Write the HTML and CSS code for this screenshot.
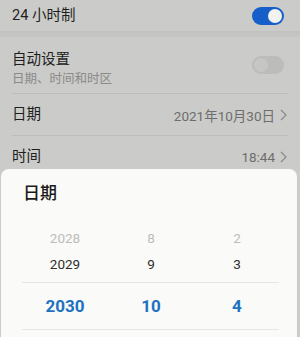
FILE: index.html
```html
<!DOCTYPE html>
<html lang="zh">
<head>
<meta charset="utf-8">
<link rel="stylesheet" href="styles.css">
</head>
<body>
<div class="screen">
  <div class="row row-top">
    <span class="label">24 小时制</span>
    <span class="switch on"><span class="knob"></span></span>
  </div>
  <div class="band"></div>
  <div class="row row-auto">
    <div class="texts">
      <span class="label">自动设置</span>
      <span class="sub">日期、时间和时区</span>
    </div>
    <span class="switch off"><span class="knob"></span></span>
  </div>
  <div class="divider"></div>
  <div class="row row-item">
    <span class="label">日期</span>
    <span class="value">2021年10月30日<svg class="chev" viewBox="0 0 7 12" width="7" height="12"><path d="M1 1l5 5-5 5" fill="none" stroke="currentColor" stroke-width="1.2"/></svg></span>
  </div>
  <div class="divider"></div>
  <div class="row row-item">
    <span class="label">时间</span>
    <span class="value">18:44<svg class="chev" viewBox="0 0 7 12" width="7" height="12"><path d="M1 1l5 5-5 5" fill="none" stroke="currentColor" stroke-width="1.2"/></svg></span>
  </div>

  <div class="sheet">
    <div class="sheet-title">日期</div>
    <div class="picker">
      <div class="prow faint"><span>2028</span><span>8</span><span>2</span></div>
      <div class="prow normal"><span>2029</span><span>9</span><span>3</span></div>
      <div class="prow selected"><span>2030</span><span>10</span><span>4</span></div>
    </div>
  </div>
</div>
</body>
</html>
```
FILE: styles.css
```css
html, body {
  margin: 0;
  padding: 0;
}
body {
  width: 300px;
  height: 337px;
  overflow: hidden;
  background: #cbcbc9;
  font-family: Roboto, "Noto Sans CJK SC", "Noto Sans", sans-serif;
}
.screen {
  position: relative;
  width: 300px;
  height: 337px;
  overflow: hidden;
}
.row {
  display: flex;
  align-items: center;
  justify-content: space-between;
  padding: 0 16px 0 12px;
}
.row-top {
  height: 31px;
}
.band {
  height: 6px;
  background: linear-gradient(#c1c1bf, #c6c6c4);
}
.row-auto {
  height: 56px;
}
.row-item {
  height: 41px;
  padding-right: 13px;
}
.texts {
  display: flex;
  flex-direction: column;
  padding-top: 8px;
}
.label {
  font-size: 14.5px;
  line-height: 20px;
  color: #1e1e1e;
}
.sub {
  font-size: 12.5px;
  line-height: 18px;
  color: #8a8a88;
}
.value {
  display: flex;
  align-items: center;
  gap: 5px;
  font-size: 13.5px;
  color: #6e6e6c;
}
.chev {
  color: #8a8a88;
}
.divider {
  height: 1px;
  background: #bcbcba;
  margin: 0 12px;
}
.switch {
  position: relative;
  width: 32px;
  height: 18px;
  border-radius: 9px;
  box-sizing: border-box;
}
.switch.on {
  background: #165fc8;
}
.switch.off {
  background: #bcbcba;
}
.knob {
  position: absolute;
  top: 2px;
  width: 14px;
  height: 14px;
  border-radius: 50%;
}
.switch.on .knob {
  right: 2px;
  background: #f2f2f0;
}
.switch.off .knob {
  left: 2px;
  background: #c6c6c4;
}
.sheet {
  position: absolute;
  top: 169px;
  left: 1px;
  right: 3px;
  bottom: -20px;
  background: #fafaf8;
  border-radius: 8px 8px 0 0;
}
.sheet-title {
  padding: 12px 0 0 22px;
  font-size: 17px;
  line-height: 24px;
  font-weight: 500;
  color: #1a1a1a;
}
.picker {
  margin: 20px 18px 0 21px;
}
.prow {
  display: grid;
  grid-template-columns: 86px 86px 86px;
  text-align: center;
  align-items: center;
}
.prow span {
  display: block;
}
.faint {
  height: 26px;
  font-size: 13.5px;
  color: #bdbdbb;
}
.normal {
  height: 26px;
  font-size: 13.5px;
  color: #2e2e2e;
}
.selected {
  margin-top: 5px;
  height: 46px;
  border-top: 1px solid #e6e6e4;
  border-bottom: 1px solid #e6e6e4;
  font-size: 17px;
  font-weight: 700;
  color: #1e72c2;
}
```
